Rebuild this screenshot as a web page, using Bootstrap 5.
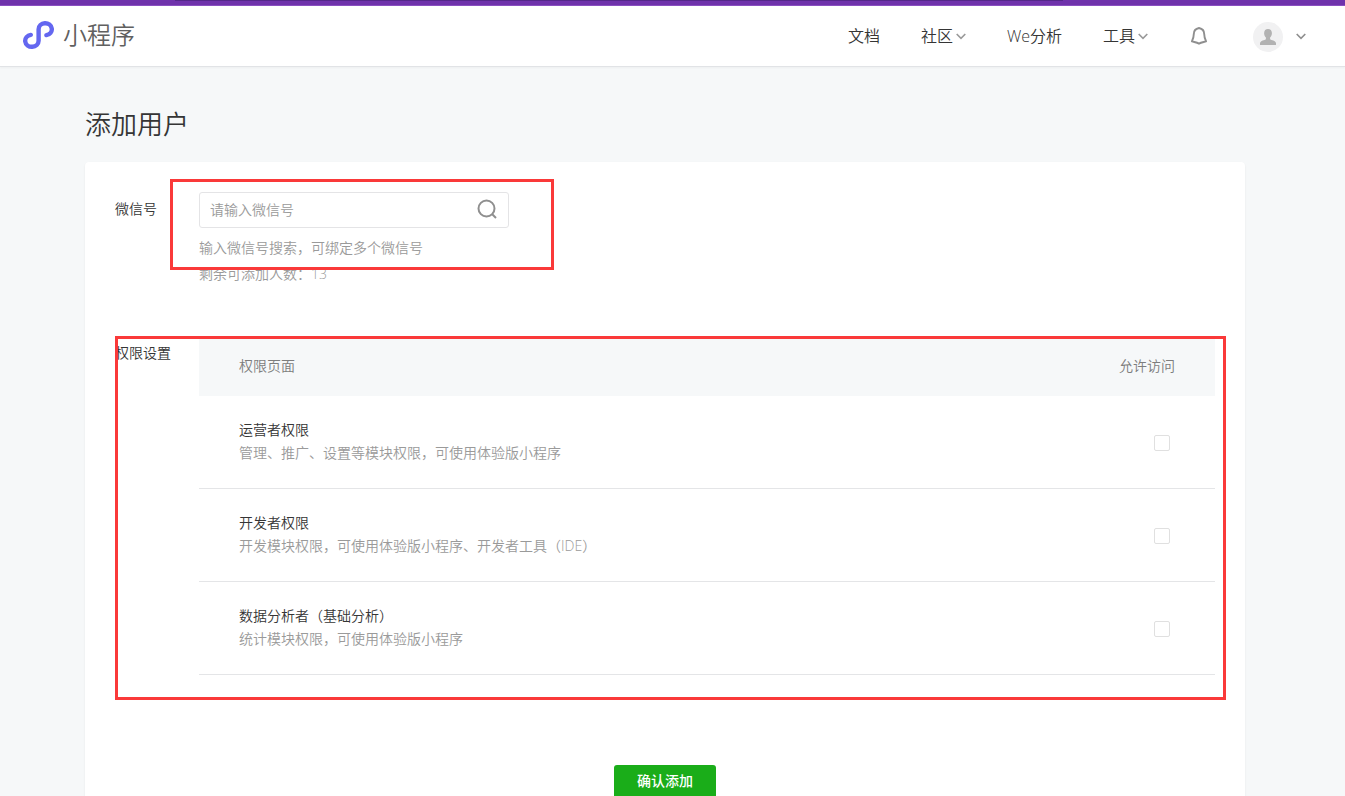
<!DOCTYPE html>
<html lang="zh-CN">
<head>
<meta charset="utf-8">
<meta name="viewport" content="width=device-width, initial-scale=1">
<title>小程序 - 添加用户</title>
<link href="https://cdn.jsdelivr.net/npm/bootstrap@5.3.0/dist/css/bootstrap.min.css" rel="stylesheet">
<style>
  body {
    background: #f6f8f9;
    color: #353535;
    font-family: "Open Sans", "Noto Sans CJK SC", sans-serif;
    font-size: 14px;
    font-weight: 350;
    line-height: 24px;
  }
  .top-strip { height: 6px; background: #6f32ab; border-bottom: 1px solid #8a4fc0; }
  .top-strip-line { height: 1px; width: 66%; margin-left: 13%; background: #54278a; }
  .site-header { height: 61px; background: #fff; border-bottom: 1px solid #e1e3e6; box-shadow: 0 1px 2px rgba(0, 0, 0, .04); padding: 0 39px 0 22px; }
  .brand-link { color: #606060; font-size: 24px; gap: 9px; padding-bottom: 2px; }
  .site-nav { font-size: 16px; gap: 41px; }
  .site-nav a { color: #353535; text-decoration: none; }
  .nav-drop { gap: 3px; }
  .account-menu { gap: 13px; }
  .page-wrap { max-width: 1160px; }
  .page-gutter { padding-right: 15px; }
  .page-title { font-size: 26px; line-height: 36px; font-weight: 350; margin: 0; padding: 39px 0 20px; }
  .panel { background: #fff; border-radius: 4px; box-shadow: 0 1px 2px rgba(0, 0, 0, .08); padding: 30px 30px 40px; }
  .field-label { flex: 0 0 84px; line-height: 34px; }
  .search-box { width: 310px; height: 36px; border: 1px solid #e4e4e6; border-radius: 3px; padding: 0 9px 2px 10px; }
  .search-box input { font-size: 14px; font-weight: 350; color: #353535; box-shadow: none; }
  .search-box input::placeholder { color: #9a9a9a; opacity: 1; }
  .hint { color: #9a9a9a; line-height: 26px; margin-top: 7px; }
  .account-row { margin-bottom: 49px; }
  .perm-table { border-collapse: separate; border-spacing: 0; }
  .perm-table th { height: 60px; background: #f6f8f9; color: #7d7d7d; font-weight: 350; padding: 0 40px; }
  .perm-table td { height: 93px; border-bottom: 1px solid #e4e5e7; padding: 0 40px; }
  .perm-table label { color: #9a9a9a; line-height: 23px; padding-bottom: 2px; display: block; }
  .perm-name { color: #353535; }
  .perm-table .form-check-input { width: 16px; height: 16px; margin: 0 5px 0 0; border: 1px solid #e0e0e0; border-radius: 2px; display: inline-block; vertical-align: middle; }
  .btn-confirm { width: 102px; height: 34px; background: #1aad19; color: #fff; font-size: 14px; font-weight: 500; line-height: 30px; border: 0; border-radius: 3px; padding: 0 0 2px; }
  .btn-confirm:hover { background: #179b16; color: #fff; }
  .actions { padding-top: 90px; }
  /* red frames drawn over the two form groups */
  .frame { position: absolute; border: 3px solid #fa3939; pointer-events: none; }
  .frame-account { left: 55px; top: -13px; width: 384px; height: 91px; }
  .frame-perm { left: 0; top: 0; right: -11px; bottom: -25px; }
</style>
</head>
<body>
<div class="top-strip"><div class="top-strip-line"></div></div>
<header class="site-header d-flex align-items-center justify-content-between">
  <a href="#" class="brand-link d-flex align-items-center text-decoration-none">
    <svg width="32" height="30" viewBox="0 0 32 30" fill="none" stroke="#6467f0" stroke-width="4.4" stroke-linecap="round" aria-hidden="true">
      <path d="M8.800 14.900A6.700 6 0 1 0 16.600 20.800V9.200A6.600 6 0 1 1 24.400 15.100"/>
    </svg>
    <span>小程序</span>
  </a>
  <nav class="site-nav d-flex align-items-center">
    <a href="#">文档</a>
    <a href="#" class="nav-drop d-flex align-items-center">社区
      <svg width="10" height="7" viewBox="0 0 10 7" fill="none" stroke="#9a9a9a" stroke-width="1.6" aria-hidden="true"><path d="M.7 1 5 5.4 9.3 1"/></svg></a>
    <a href="#">We分析</a>
    <a href="#" class="nav-drop d-flex align-items-center">工具
      <svg width="10" height="7" viewBox="0 0 10 7" fill="none" stroke="#9a9a9a" stroke-width="1.6" aria-hidden="true"><path d="M.7 1 5 5.4 9.3 1"/></svg></a>
    <a href="#" class="d-flex" aria-label="通知">
      <svg width="23" height="20" viewBox="1 0 23 20" fill="none" stroke="#8f8f8f" stroke-width="1.9" stroke-linejoin="round" aria-hidden="true"><path d="M11 2C7.700 2.700 5.800 4.900 5.800 8C5.800 11.500 5 13.100 3.900 15.300C6.200 16.100 8.600 16.400 11 17.700C13.400 16.400 15.800 16.100 18.100 15.300C17 13.100 16.200 11.500 16.200 8C16.200 4.900 14.300 2.700 11 2Z"/></svg></a>
    <a href="#" class="account-menu d-flex align-items-center" aria-label="账号">
      <svg width="30" height="32" viewBox="0 -2 30 32" aria-hidden="true"><circle cx="15" cy="15" r="15" fill="#f1f1f2"/><path fill="#b2b2b2" d="M15 7c2.400 0 3.900 1.600 3.900 4.200 0 1.900-.8 3.300-1.800 4.200v1.300c0 .6.5.9 1.400 1.200 2.600.8 4.500 1.600 4.500 3.400V23H7v-1.700c0-1.800 1.900-2.600 4.500-3.400.9-.3 1.400-.6 1.400-1.200v-1.300c-1-.9-1.800-2.300-1.800-4.200C11.100 8.600 12.600 7 15 7Z"/></svg>
      <svg width="10" height="7" viewBox="0 0 10 7" fill="none" stroke="#8f8f8f" stroke-width="1.6" aria-hidden="true"><path d="M.7 1 5 5.4 9.3 1"/></svg></a>
  </nav>
</header>

<div class="page-gutter">
  <main class="page-wrap mx-auto">
    <h1 class="page-title">添加用户</h1>
    <form class="panel">
      <div class="account-row d-flex position-relative">
        <label class="field-label" for="wechat-id">微信号</label>
        <div class="flex-grow-1">
          <div class="search-box d-flex align-items-center">
            <input type="text" id="wechat-id" class="form-control border-0 bg-transparent p-0" placeholder="请输入微信号">
            <button type="button" class="btn border-0 p-0 d-flex" aria-label="搜索">
              <svg width="24" height="24" viewBox="0 0 24 24" fill="none" stroke="#8f8f8f" stroke-width="2" aria-hidden="true"><circle cx="11.500" cy="11.500" r="8"/><path d="m17 17 4 4"/></svg>
            </button>
          </div>
          <div class="hint">输入微信号搜索，可绑定多个微信号<br>剩余可添加人数：13</div>
        </div>
        <div class="frame frame-account"></div>
      </div>

      <div class="d-flex position-relative">
        <div class="field-label">权限设置</div>
        <table class="perm-table flex-grow-1">
          <thead>
            <tr><th scope="col">权限页面</th><th scope="col" class="text-end">允许访问</th></tr>
          </thead>
          <tbody>
            <tr>
              <td><label for="perm-operator"><span class="perm-name">运营者权限</span><br>管理、推广、设置等模块权限，可使用体验版小程序</label></td>
              <td class="text-end"><input type="checkbox" class="form-check-input" id="perm-operator"></td>
            </tr>
            <tr>
              <td><label for="perm-developer"><span class="perm-name">开发者权限</span><br>开发模块权限，可使用体验版小程序、开发者工具（IDE）</label></td>
              <td class="text-end"><input type="checkbox" class="form-check-input" id="perm-developer"></td>
            </tr>
            <tr>
              <td><label for="perm-analyst"><span class="perm-name">数据分析者（基础分析）</span><br>统计模块权限，可使用体验版小程序</label></td>
              <td class="text-end"><input type="checkbox" class="form-check-input" id="perm-analyst"></td>
            </tr>
          </tbody>
        </table>
        <div class="frame frame-perm"></div>
      </div>

      <div class="actions text-center">
        <button type="submit" class="btn btn-confirm">确认添加</button>
      </div>
    </form>
  </main>
</div>
<script src="https://cdn.jsdelivr.net/npm/bootstrap@5.3.0/dist/js/bootstrap.bundle.min.js"></script>
</body>
</html>
